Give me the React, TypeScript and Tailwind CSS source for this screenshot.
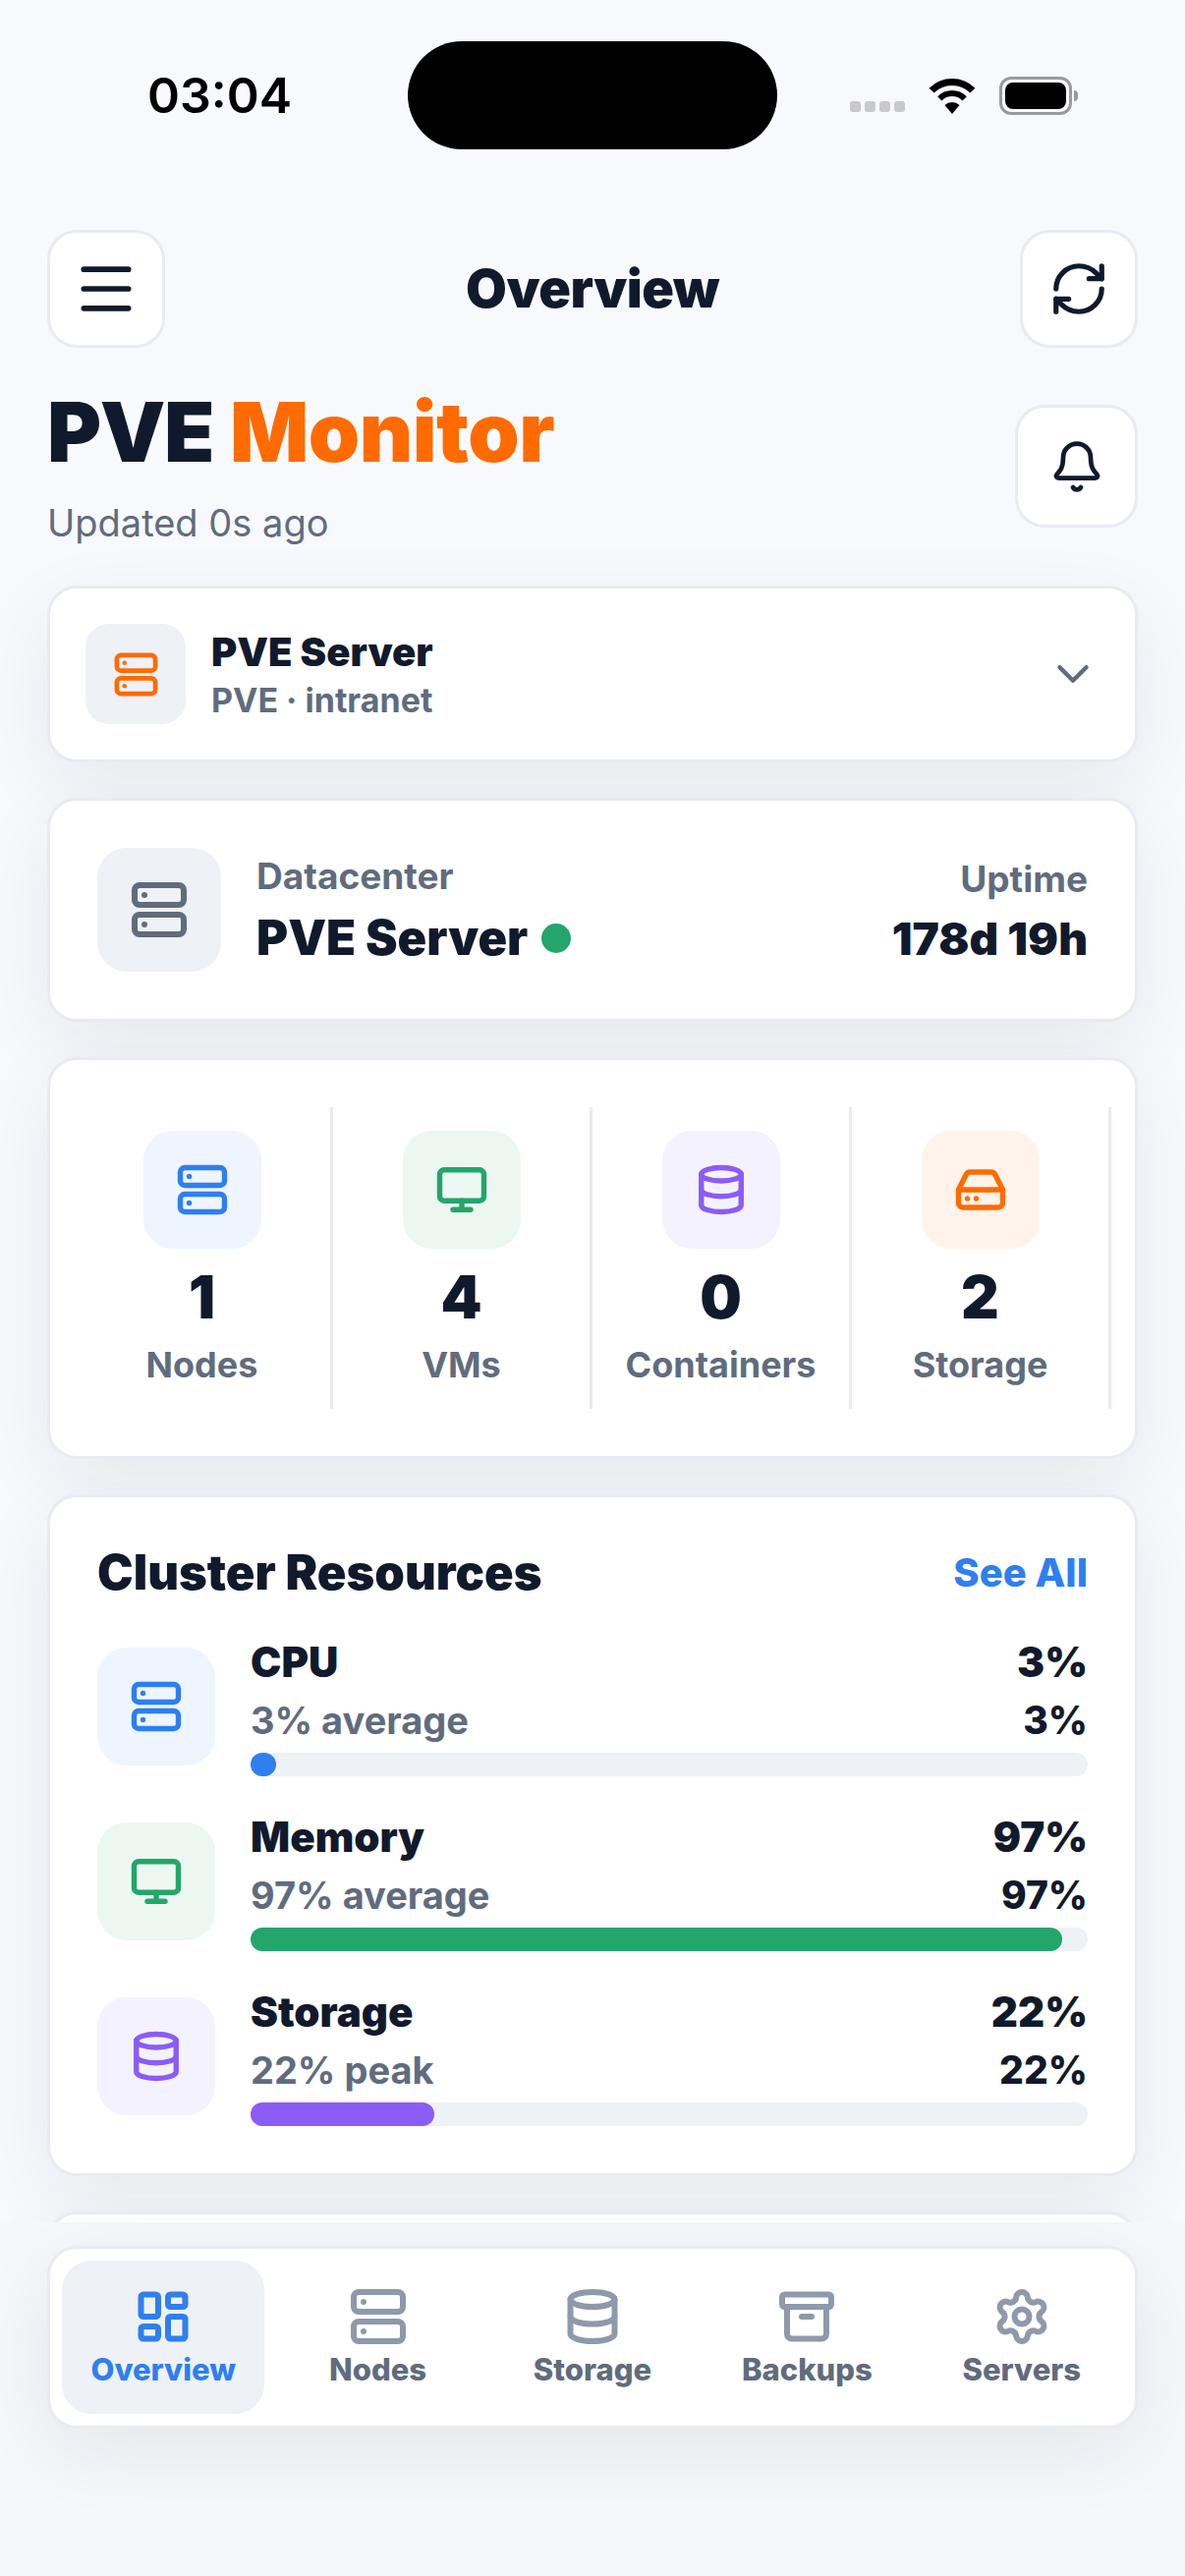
import type { ReactNode } from 'react';
import { Archive, Bell, ChevronDown, Database, HardDrive, LayoutDashboard, Menu, Monitor, RefreshCw, Server, Settings } from 'lucide-react';

const cardClass =
  'rounded-[30px] border-[3px] border-[#e9ebf2] bg-white shadow-[0_24px_80px_rgba(17,26,44,0.07)]';

function StatusBar() {
  return (
    <div className="flex h-[234px] shrink-0 items-start pt-[42px]">
      <div className="flex h-[110px] w-[415px] items-center pl-[150px] text-[50px] leading-none font-semibold text-black">
        03:04
      </div>
      <div className="h-[110px] w-[376px] rounded-full bg-black" />
      <div className="flex h-[110px] items-center pl-[74px]">
        <div className="mt-[22px] flex gap-[4px]">
          <span className="h-[11px] w-[11px] rounded-[3px] bg-[#c9c9cc]" />
          <span className="h-[11px] w-[11px] rounded-[3px] bg-[#c9c9cc]" />
          <span className="h-[11px] w-[11px] rounded-[3px] bg-[#c9c9cc]" />
          <span className="h-[11px] w-[11px] rounded-[3px] bg-[#c9c9cc]" />
        </div>
        <svg className="ml-[23px]" width="50" height="38" viewBox="0 0 50 38" fill="none">
          <path d="M4.1 14.1A29.5 29.5 0 0 1 45.9 14.1" stroke="#000" strokeWidth="7" />
          <path d="M12.3 22.3A18 18 0 0 1 37.7 22.3" stroke="#000" strokeWidth="6" />
          <path d="M25 38L17.5 29A11 11 0 0 1 32.5 29Z" fill="#000" />
        </svg>
        <div className="ml-[23px] flex items-center">
          <div className="flex h-[39px] w-[74px] items-center justify-center rounded-[12px] border-[3px] border-[#9a9a9e]">
            <div className="h-[27px] w-[62px] rounded-[8px] bg-black" />
          </div>
          <div className="ml-[2px] h-[11px] w-[4px] rounded-r-full bg-[#9a9a9e]" />
        </div>
      </div>
    </div>
  );
}

function IconButton({ className, children }: { className: string; children: ReactNode }) {
  return (
    <button className={`flex items-center justify-center rounded-[30px] border-[3px] border-[#e9ebf2] bg-white ${className}`}>
      {children}
    </button>
  );
}

function IconBox({ className, children }: { className: string; children: ReactNode }) {
  return <div className={`flex shrink-0 items-center justify-center ${className}`}>{children}</div>;
}

const stats = [
  { icon: <Server size={54} strokeWidth={2.4} className="text-[#2f7ff0]" />, bg: 'bg-[#eef5ff]', value: '1', label: 'Nodes' },
  { icon: <Monitor size={54} strokeWidth={2.4} className="text-[#22a66b]" />, bg: 'bg-[#edf7f2]', value: '4', label: 'VMs' },
  { icon: <Database size={54} strokeWidth={2.4} className="text-[#8b5cf6]" />, bg: 'bg-[#f5f2ff]', value: '0', label: 'Containers' },
  { icon: <HardDrive size={54} strokeWidth={2.4} className="text-[#ff6b00]" />, bg: 'bg-[#fff3eb]', value: '2', label: 'Storage' },
];

const resources = [
  { icon: <Server size={54} strokeWidth={2.4} className="text-[#2f7ff0]" />, bg: 'bg-[#eef5ff]', name: 'CPU', value: '3%', sub: '3% average', fill: 'w-[3%] bg-[#2f7ff0]' },
  { icon: <Monitor size={54} strokeWidth={2.4} className="text-[#22a66b]" />, bg: 'bg-[#edf7f2]', name: 'Memory', value: '97%', sub: '97% average', fill: 'w-[97%] bg-[#22a66b]' },
  { icon: <Database size={54} strokeWidth={2.4} className="text-[#8b5cf6]" />, bg: 'bg-[#f5f2ff]', name: 'Storage', value: '22%', sub: '22% peak', fill: 'w-[22%] bg-[#8b5cf6]' },
];

const tabs = [
  { icon: LayoutDashboard, label: 'Overview', active: true },
  { icon: Server, label: 'Nodes', active: false },
  { icon: Database, label: 'Storage', active: false },
  { icon: Archive, label: 'Backups', active: false },
  { icon: Settings, label: 'Servers', active: false },
];

export default function App() {
  return (
    <div className="flex h-[2622px] w-[1206px] flex-col overflow-hidden bg-[#f8f9fd] [font-family:Inter,sans-serif] text-[#111a2c]">
      <StatusBar />

      <main className="min-h-0 flex-1 overflow-hidden px-[48px]">
        {/* Top bar */}
        <div className="flex items-center justify-between">
          <IconButton className="h-[120px] w-[120px]">
            <Menu size={68} strokeWidth={2} />
          </IconButton>
          <h2 className="text-[54px] leading-none font-black tracking-[-0.5px]">Overview</h2>
          <IconButton className="h-[120px] w-[120px]">
            <RefreshCw size={62} strokeWidth={2} />
          </IconButton>
        </div>

        {/* Title */}
        <div className="mt-[36px] flex items-start justify-between">
          <div>
            <h1 className="flex gap-[17px] text-[84px] leading-[100px] font-black">
              <span className="tracking-[-1.5px]">PVE</span>
              <span className="tracking-[-0.5px] text-[#ff6b00]">Monitor</span>
            </h1>
            <p className="mt-[17px] text-[38px] leading-[50px] text-[#606c7e]">Updated 0s ago</p>
          </div>
          <IconButton className="mt-[22px] h-[125px] w-[125px]">
            <Bell size={56} strokeWidth={2} />
          </IconButton>
        </div>

        <div className="mt-[39px] flex flex-col gap-[36px]">
          {/* Server picker */}
          <div className={`flex h-[180px] items-center pr-[36px] pl-[36px] ${cardClass}`}>
            <IconBox className="h-[102px] w-[102px] rounded-[24px] bg-[#eef1f6]">
              <Server size={47} strokeWidth={2.4} className="text-[#ff6b00]" />
            </IconBox>
            <div className="ml-[26px] flex-1 pt-[2px]">
              <div className="text-[40px] leading-[48px] font-black">PVE Server</div>
              <div className="mt-[3px] text-[34px] leading-[44px] font-bold text-[#606c7e]">PVE · intranet</div>
            </div>
            <ChevronDown size={54} strokeWidth={2} className="text-[#606c7e]" />
          </div>

          {/* Datacenter */}
          <div className={`flex items-center p-[48px] ${cardClass}`}>
            <IconBox className="h-[126px] w-[126px] rounded-[30px] bg-[#eef1f6]">
              <Server size={60} strokeWidth={2.4} className="text-[#606c7e]" />
            </IconBox>
            <div className="ml-[36px] flex-1">
              <div className="text-[37px] leading-[46px] font-bold text-[#606c7e]">Datacenter</div>
              <div className="mt-[12px] flex items-center gap-[14px]">
                <span className="text-[49px] leading-[56px] font-black">PVE Server</span>
                <span className="h-[30px] w-[30px] rounded-full bg-[#22a66b]" />
              </div>
            </div>
            <div className="text-right">
              <div className="mt-[3px] text-[37px] leading-[46px] font-bold text-[#606c7e]">Uptime</div>
              <div className="mt-[9px] text-[46px] leading-[56px] font-black">178d 19h</div>
            </div>
          </div>

          {/* Counts */}
          <div className={`flex py-[48px] pl-[24px] ${cardClass}`}>
            {stats.map((s) => (
              <div key={s.label} className="flex h-[307px] w-[264px] flex-col items-center border-r-[3px] border-[#e9ebf2] pt-[24px]">
                <IconBox className={`h-[120px] w-[120px] rounded-[30px] ${s.bg}`}>{s.icon}</IconBox>
                <div className="mt-[13px] text-[60px] leading-[72px] font-black">{s.value}</div>
                <div className="mt-[11px] text-[36px] leading-[44px] font-bold text-[#606c7e]">{s.label}</div>
              </div>
            ))}
          </div>

          {/* Cluster resources */}
          <div className={`p-[48px] ${cardClass}`}>
            <div className="flex items-center justify-between pt-[2px]">
              <h3 className="text-[49px] leading-[54px] font-black">Cluster Resources</h3>
              <span className="text-[40px] leading-[54px] font-extrabold text-[#2f7ff0]">See All</span>
            </div>
            <div className="mt-[49px] flex flex-col gap-[47px]">
              {resources.map((r) => (
                <div key={r.name} className="flex gap-[36px]">
                  <IconBox className={`h-[120px] w-[120px] rounded-[30px] ${r.bg}`}>{r.icon}</IconBox>
                  <div className="flex-1">
                    <div className="flex justify-between text-[42px] leading-[30px] font-black">
                      <span>{r.name}</span>
                      <span>{r.value}</span>
                    </div>
                    <div className="mt-[26px] flex items-center justify-between leading-[36px]">
                      <span className="text-[38px] font-bold text-[#606c7e]">{r.sub}</span>
                      <span className="text-[39px] font-extrabold">{r.value}</span>
                    </div>
                    <div className="mt-[15px] h-[24px] rounded-full bg-[#eef1f6]">
                      <div className={`h-full rounded-full ${r.fill}`} />
                    </div>
                  </div>
                </div>
              ))}
            </div>
          </div>

          {/* Next card, cut off by the tab bar */}
          <div className={`h-[300px] ${cardClass}`} />
        </div>
      </main>

      {/* Tab bar */}
      <footer className="h-[360px] shrink-0 bg-[#f6f7fb] px-[48px] pt-[24px]">
        <nav className={`grid grid-cols-5 gap-[12px] px-[12px] py-[12px] ${cardClass}`}>
          {tabs.map((t) => (
            <div
              key={t.label}
              className={`flex h-[156px] flex-col items-center rounded-[30px] pt-[27px] ${t.active ? 'bg-[#eef1f6]' : ''}`}
            >
              <t.icon size={60} strokeWidth={2.4} className={t.active ? 'text-[#2f7ff0]' : 'text-[#8e99ab]'} />
              <span className={`mt-[6px] text-[31px] leading-[36px] font-extrabold ${t.active ? 'text-[#2f7ff0]' : 'text-[#606c7e]'}`}>
                {t.label}
              </span>
            </div>
          ))}
        </nav>
      </footer>
    </div>
  );
}
